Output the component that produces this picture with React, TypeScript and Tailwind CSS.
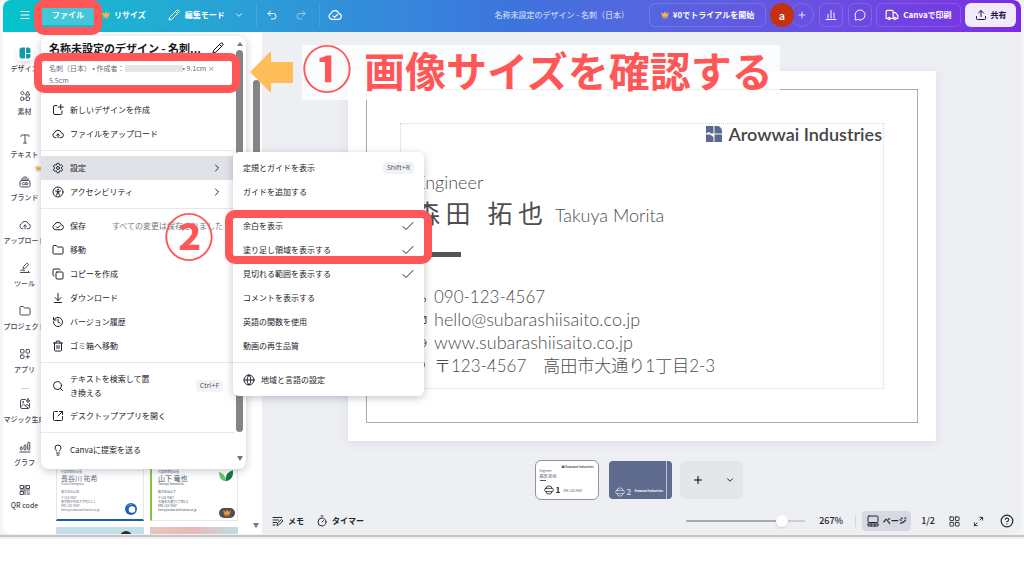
import type { ReactNode } from "react";
import {
  ArrowDownToLine,
  ChevronDown,
  ChevronRight,
  CircleHelp,
  Copy,
  Crown,
  Folder,
  Globe,
  History,
  Lightbulb,
  Menu,
  MessageCircle,
  Pencil,
  Plus,
  Redo2,
  Search,
  Settings,
  SquareArrowOutUpRight,
  Timer,
  Trash2,
  Truck,
  Type,
  Undo2,
  Upload,
} from "lucide-react";

type IconProps = { className?: string; children?: ReactNode };

function Icon({ className = "size-3", children }: IconProps) {
  return (
    <svg
      viewBox="0 0 24 24"
      className={`shrink-0 ${className}`}
      fill="none"
      stroke="currentColor"
      strokeWidth="2"
      strokeLinecap="round"
      strokeLinejoin="round"
      aria-hidden="true"
    >
      {children}
    </svg>
  );
}

const cloud = "M7 19.5a5.3 5.3 0 0 1-1.6-10.3 7 7 0 0 1 13.3.4A5 5 0 0 1 18 19.5z";

const CloudDone = ({ className }: IconProps) => (
  <Icon className={className}>
    <path d={cloud} />
    <path d="m8.5 13.5 2.7 2.7 5-5" />
  </Icon>
);

const CloudUp = ({ className }: IconProps) => (
  <Icon className={className}>
    <path d="M8 19.5H7a5.3 5.3 0 0 1-1.6-10.3 7 7 0 0 1 13.3.4A5 5 0 0 1 18 19.5h-2" />
    <path d="M12 19.5V12m-3 2.8 3-3 3 3" />
  </Icon>
);

const NewDesign = ({ className }: IconProps) => (
  <Icon className={className}>
    <path d="M10 3H6a3 3 0 0 0-3 3v12a3 3 0 0 0 3 3h11a3 3 0 0 0 3-3v-4M17.500 1v10M12.500 6h10" />
  </Icon>
);

const Access = ({ className }: IconProps) => (
  <Icon className={className}>
    <circle cx="12" cy="12" r="10" />
    <circle cx="12" cy="6.800" r="1" fill="currentColor" />
    <path d="M7 10c3.500 1 6.500 1 10 0M10.500 10.500v4L9 18.500M13.500 10.500v4l1.500 4M12 10.800v3.700" />
  </Icon>
);

const Elements = ({ className }: IconProps) => (
  <Icon className={className}>
    <path d="m7 3 3.500 3.500L7 10 3.500 6.500zM17.500 3l4 7h-8z" />
    <circle cx="6.500" cy="17.500" r="3.500" />
    <rect x="14" y="14" width="7" height="7" rx="1.500" />
  </Icon>
);

const Brand = ({ className }: IconProps) => (
  <Icon className={className}>
    <rect x="2" y="9" width="20" height="13" rx="3" />
    <path d="M4.500 6h15M8 3c2-1.500 6-1.500 8 0M11 13.500c-3-1.500-4.500 0-4.500 2s1.500 3.500 4.500 2M14 13.500h2.500c2 0 2 4 0 4H14z" />
  </Icon>
);

const Tools = ({ className }: IconProps) => (
  <Icon className={className}>
    <path d="m8 14 1-5 6-6c1.500-1.500 5 1 3.500 3l-6 6.500zM3 17c3-3 5 2 8 1M3 21h18l-3-3" />
  </Icon>
);

const Apps = ({ className }: IconProps) => (
  <Icon className={className}>
    <rect x="3" y="3" width="7" height="7" rx="1.500" />
    <rect x="14" y="3" width="7" height="7" rx="1.500" />
    <rect x="3" y="14" width="7" height="7" rx="1.500" />
    <path d="M17.500 14v7M14 17.500h7" />
  </Icon>
);

const Magic = ({ className }: IconProps) => (
  <Icon className={className}>
    <path d="M13 3H6a3 3 0 0 0-3 3v12a3 3 0 0 0 3 3h12a3 3 0 0 0 3-3v-7M4 17l5-5 9 8M13 15l3-2 4 3M18 1.500l1 3 3 1-3 1-1 3-1-3-3-1 3-1z" />
    <circle cx="8" cy="8" r="1" />
  </Icon>
);

const Graph = ({ className }: IconProps) => (
  <Icon className={className}>
    <rect x="2.500" y="12" width="4" height="6" rx="2" />
    <rect x="10" y="8" width="4" height="10" rx="2" />
    <rect x="17.500" y="2.500" width="4" height="15.500" rx="2" />
    <path d="M2 22h20" />
  </Icon>
);

const QrCode = ({ className }: IconProps) => (
  <Icon className={className}>
    <path d="M3 3h6v6H3zM15 3h6v6h-6zM3 15h6v6H3zM12 3v6M3 12h9M15 12h6M12 12v9M16 16h1M20 16v1M16 20h5" />
  </Icon>
);

const Stats = ({ className }: IconProps) => (
  <Icon className={className}>
    <path d="M6 11v7M12 3v15M18 8v10M2 21h20" />
  </Icon>
);

const Notes = ({ className }: IconProps) => (
  <Icon className={className}>
    <path d="M2 5h18M2 10h11M2 15h7M2 20h4M10 20l1-4 8-7 3 3-8 7z" />
  </Icon>
);

const PagesIcon = ({ className }: IconProps) => (
  <Icon className={className}>
    <rect x="2" y="2" width="20" height="13" rx="2" />
    <path d="M2 18v4h20v-4M2 18h20M8.500 18v4M15.500 18v4" />
  </Icon>
);

const GridIcon = ({ className }: IconProps) => (
  <Icon className={className}>
    <rect x="2" y="2" width="8" height="8" rx="1" />
    <rect x="14" y="2" width="8" height="8" rx="1" />
    <rect x="2" y="14" width="8" height="8" rx="1" />
    <rect x="14" y="14" width="8" height="8" rx="1" />
  </Icon>
);

const Expand = ({ className }: IconProps) => (
  <Icon className={className}>
    <path d="M15 3h6v6M21 3l-6 6M9 21H3v-6M3 21l6-6" />
  </Icon>
);

const PageMark = ({ className }: IconProps) => (
  <Icon className={className}>
    <path d="M5 8a7 6 0 0 1 14 0M5 16a7 6 0 0 0 14 0" />
    <rect x="2" y="8" width="20" height="8" rx="2" />
  </Icon>
);

const Templates = () => (
  <span className="flex size-4 items-center justify-center rounded-sm bg-white shadow-md">
    <svg viewBox="0 0 24 24" className="size-3 fill-[#0e9aa8]" aria-hidden="true">
      <path d="M6 1h6v22H6a5 5 0 0 1-5-5V6a5 5 0 0 1 5-5zM14 1h4a5 5 0 0 1 5 5v6h-9zM14 14h9v4a5 5 0 0 1-5 5h-4z" />
    </svg>
  </span>
);

const rail = [
  { label: "デザイン", icon: <Templates /> },
  { label: "素材", icon: <Elements /> },
  { label: "テキスト", icon: <Type className="size-3" /> },
  { label: "ブランド", icon: <Brand />, pro: true },
  { label: "アップロード", icon: <CloudUp /> },
  { label: "ツール", icon: <Tools /> },
  { label: "プロジェクト", icon: <Folder className="size-3" /> },
  { label: "アプリ", icon: <Apps /> },
  { label: "マジック生成", icon: <Magic />, divided: true },
  { label: "グラフ", icon: <Graph /> },
  { label: "QR code", icon: <QrCode /> },
];

function Header() {
  const outlined =
    "flex h-6 items-center justify-center rounded-md border border-white/15";
  return (
    <header className="flex h-8 items-center rounded-t-lg bg-linear-to-r from-[#02c3cc] via-[#3c74de] to-[#7a2ae4] pr-[5px] pb-0.5 text-[8px] font-bold text-white">
      <button className="flex w-[39px] justify-center pl-1" aria-label="メニュー">
        <Menu className="size-3" />
      </button>
      <button className="h-5 w-[52px] bg-white/20">ファイル</button>
      <button className="ml-2 flex items-center gap-1">
        <Crown className="size-2 fill-[#f5b942] text-[#f5b942]" />
        リサイズ
      </button>
      <button className="ml-[22px] flex items-center gap-[5px]">
        <Pencil className="size-3" />
        編集モード
        <ChevronDown className="ml-1 size-[10px]" />
      </button>
      <span className="ml-3 h-6 w-px bg-white/10" />
      <button className="ml-2 px-px" aria-label="元に戻す">
        <Undo2 className="size-3" />
      </button>
      <button className="ml-4 text-white/50" aria-label="やり直す">
        <Redo2 className="size-3" />
      </button>
      <span className="ml-3 h-6 w-px bg-white/10" />
      <button className="ml-2" aria-label="保存済み">
        <CloudDone className="size-[14px]" />
      </button>
      <p className="ml-auto font-medium text-white/70">名称未設定のデザイン - 名刺（日本）</p>
      <button className={`${outlined} ml-5 w-[117px] gap-1`}>
        <Crown className="size-2 fill-[#f5b942] text-[#f5b942]" />
        ¥0でトライアルを開始
      </button>
      <span className="z-10 ml-1 flex size-6 items-center justify-center rounded-full bg-[#c5330e] text-[11px] font-medium">
        a
      </span>
      <button
        className="-ml-1 flex size-6 items-center justify-center rounded-full border border-white/15"
        aria-label="メンバーを追加"
      >
        <Plus className="size-[10px]" />
      </button>
      <button className={`${outlined} ml-[5px] w-6`} aria-label="分析">
        <Stats />
      </button>
      <button className={`${outlined} ml-[5px] w-6`} aria-label="コメント">
        <MessageCircle className="size-3" />
      </button>
      <button className={`${outlined} ml-1 w-[85px] gap-1`}>
        <Truck className="size-[14px]" />
        Canvaで印刷
      </button>
      <button className="ml-1 flex h-6 w-[51px] items-center justify-center gap-1 rounded-md bg-[#f1e9fd] text-[#22143c]">
        <Upload className="size-3" />
        共有
      </button>
    </header>
  );
}

function Rail() {
  return (
    <nav className="w-[43px] shrink-0 overflow-hidden bg-white pt-3 [contain:size]">
      {rail.map((item) => (
        <div key={item.label}>
          {item.divided && <hr className="mx-auto mb-1.5 w-2 border-gray-300" />}
          <a
            href="#"
            className="relative flex h-[43px] flex-col items-center text-[7px] font-medium whitespace-nowrap text-[#454c59]"
          >
            <span className="flex h-[18px] items-center">{item.icon}</span>
            <span className="leading-3">{item.label}</span>
            {item.pro && (
              <Crown className="absolute -top-2 right-1 size-[7px] fill-[#f0b04a] text-[#f0b04a]" />
            )}
          </a>
        </div>
      ))}
    </nav>
  );
}

function TemplatePanel() {
  return (
    <aside className="flex w-[216px] shrink-0 bg-white [contain:size]">
      <div className="flex flex-1 flex-col justify-end overflow-hidden pr-3 pl-[10px]">
        <div className="grid grid-cols-2 gap-1.5">
          <div className="relative h-[58px] border border-b-2 border-gray-200 border-b-[#1b5bb0] pt-1.5 pl-1 text-[3px] leading-1 text-gray-500">
            <p>代表取締役社長</p>
            <p className="text-[7px] leading-2">長谷川 祐希</p>
            <p>Yuuki Hasegawa</p>
            <p className="mt-1">株式会社山田</p>
            <p className="mt-0.5">〒123-4567</p>
            <p>東京都中央区大手町3-2-1</p>
            <p>090-123-4567</p>
            <p>hello@subarashiisaito.co.jp</p>
            <svg viewBox="0 0 24 24" className="absolute right-1.5 bottom-1 size-3">
              <circle cx="12" cy="12" r="12" fill="#1d63bd" />
              <circle cx="14" cy="13" r="6.500" fill="#fff" />
              <path d="M3 8c3-5 9-7 14-4-6-1-10 1-14 4z" fill="#8ec3f0" />
            </svg>
          </div>
          <div className="relative h-[58px] border border-l-2 border-gray-200 border-l-[#86c440] pt-1.5 pl-1.5 text-[3px] leading-1 text-gray-600">
            <p>代表取締役社長</p>
            <p className="text-[7px] leading-2">山下 竜也</p>
            <p>Tatsuya Yamashita</p>
            <p className="mt-1">株式会社山下</p>
            <p className="mt-0.5">〒123-4567</p>
            <p>大阪市大通り1丁目2-3</p>
            <p>090-123-4567</p>
            <p>hello@subarashiisaito.co.jp</p>
            <svg viewBox="0 0 24 20" className="absolute top-1.5 right-1 h-3 w-[14px]">
              <path d="M12 19C2 18 0 10 0 3c7 2 12 7 12 16z" fill="#6fc36f" />
              <path d="M12 19C10 8 16 2 24 0c1 11-3 17-12 19z" fill="#147a3c" />
            </svg>
            <span className="absolute right-0.5 bottom-0.5 flex h-[10px] w-4 items-center justify-center rounded-full bg-[#4c4f55]">
              <Crown className="size-2 fill-[#f0963c] text-[#f0963c]" />
            </span>
          </div>
          <div className="flex h-[7px] justify-end overflow-hidden bg-[#c3dfe6] px-3">
            <span className="mt-1 h-3 w-3 rounded-full bg-[#2b2b30]" />
          </div>
          <div className="h-[7px] bg-linear-to-r from-[#e9c4bf] via-[#e8b9b8] to-[#bfdde6]" />
        </div>
      </div>
      <div className="flex w-3 flex-col items-center pt-12 pb-1.5">
        <span className="h-[224px] w-[7px] rounded-full bg-[#858585]" />
        <span className="mt-auto border-x-3 border-t-5 border-x-transparent border-t-[#777]" />
      </div>
    </aside>
  );
}

type Item = { label: string; icon: ReactNode; arrow?: boolean; note?: string; keys?: string };

const menu: Item[][] = [
  [
    { label: "新しいデザインを作成", icon: <NewDesign /> },
    { label: "ファイルをアップロード", icon: <CloudUp /> },
  ],
  [
    { label: "設定", icon: <Settings className="size-3" />, arrow: true },
    { label: "アクセシビリティ", icon: <Access />, arrow: true },
  ],
  [
    { label: "保存", icon: <CloudDone />, note: "すべての変更は保存されました" },
    { label: "移動", icon: <Folder className="size-3" /> },
    { label: "コピーを作成", icon: <Copy className="size-3" /> },
    { label: "ダウンロード", icon: <ArrowDownToLine className="size-3" /> },
    { label: "バージョン履歴", icon: <History className="size-3" /> },
    { label: "ゴミ箱へ移動", icon: <Trash2 className="size-3" /> },
  ],
  [
    { label: "テキストを検索して置き換える", icon: <Search className="size-3" />, keys: "Ctrl+F" },
    { label: "デスクトップアプリを開く", icon: <SquareArrowOutUpRight className="size-3" /> },
  ],
  [{ label: "Canvaに提案を送る", icon: <Lightbulb className="size-3" /> }],
];

function FileMenu() {
  return (
    <div className="absolute top-9 left-[38px] z-20 w-[205px] rounded-lg bg-white pb-[7px] shadow-[0_2px_8px_rgba(60,70,100,0.3)]">
      <div className="flex h-6 items-center justify-between pr-[22px] pl-2">
        <h1 className="text-[11px] font-bold whitespace-nowrap text-[#15181e]">
          名称未設定のデザイン - 名刺...
        </h1>
        <button aria-label="名前を変更">
          <Pencil className="size-3" />
        </button>
      </div>
      <p className="mb-[10px] flex h-7 w-[180px] flex-wrap content-center items-center pl-2 text-[7px] leading-3 text-[#666c78]">
        名刺（日本） • 作成者：
        <span className="h-[7px] w-[58px] bg-[#e4e5e8]" />
        <span>• 9.1cm ×</span>
        <span>5.5cm</span>
      </p>
      {menu.map((group, i) => (
        <div key={i}>
          {i > 0 && <hr className="mt-1 mr-3 mb-[5px] border-gray-200" />}
          {group.map((item) => (
            <button
              key={item.label}
              className={`flex min-h-6 w-[192px] items-center pr-[10px] pl-[11px] text-left text-[8px] text-[#1c212b] ${
                item.label === "設定" ? "bg-[#e0e2e7]" : ""
              }`}
            >
              {item.icon}
              <span
                className={
                  item.keys ? "ml-1.5 w-[84px] py-1 leading-[14px]" : "ml-1.5 whitespace-nowrap"
                }
              >
                {item.label}
              </span>
              {item.note && (
                <span className="ml-auto whitespace-nowrap text-[#747a86]">{item.note}</span>
              )}
              {item.arrow && <ChevronRight className="ml-auto size-3" />}
              {item.keys && (
                <kbd className="ml-auto rounded-sm bg-[#f1f3f7] px-1 py-px font-['Open_Sans',sans-serif] text-[7px] text-[#4a505c]">
                  {item.keys}
                </kbd>
              )}
            </button>
          ))}
        </div>
      ))}
      <div className="absolute top-1.5 right-[3px] bottom-2 flex w-[7px] flex-col items-center">
        <span className="border-x-3 border-b-4 border-x-transparent border-b-[#777]" />
        <span className="mt-1 mb-6 w-full flex-1 rounded-full bg-[#858585]" />
        <span className="border-x-3 border-t-5 border-x-transparent border-t-[#777]" />
      </div>
    </div>
  );
}

const views = [
  { label: "余白を表示", on: true },
  { label: "塗り足し領域を表示する", on: true },
  { label: "見切れる範囲を表示する", on: true },
  { label: "コメントを表示する", on: false },
  { label: "英語の関数を使用", on: false },
  { label: "動画の再生品質", on: false },
];

function SettingsMenu() {
  const row = "flex h-6 w-full items-center justify-between px-[10px]";
  return (
    <div className="absolute top-[152px] left-[230px] z-20 w-[191px] rounded-md bg-white py-1 text-[8px] text-[#1c212b] shadow-[0_2px_8px_rgba(60,70,100,0.3)]">
      <button className={row}>
        定規とガイドを表示
        <kbd className="rounded-sm bg-[#f1f3f7] px-1 py-px font-['Open_Sans',sans-serif] text-[7px] text-[#4a505c]">
          Shift+R
        </kbd>
      </button>
      <button className={`${row} mb-[10px]`}>ガイドを追加する</button>
      {views.map((v) => (
        <button key={v.label} role="menuitemcheckbox" aria-checked={v.on} className={row}>
          {v.label}
          {v.on && (
            <Icon className="size-3">
              <path d="m2 13 6 6L22 5" />
            </Icon>
          )}
        </button>
      ))}
      <hr className="mt-1 mb-[5px] border-gray-200" />
      <button className="flex h-6 items-center gap-1.5 px-[10px]">
        <Globe className="size-3" />
        地域と言語の設定
      </button>
    </div>
  );
}

const contacts = [
  { mark: "M5 3h4l2 5-3 2a12 12 0 0 0 6 6l2-3 5 2v4a2 2 0 0 1-2 2A17 17 0 0 1 3 5z", text: "090-123-4567" },
  { mark: "M2 5h20v14H2zM2 6l10 7 10-7", text: "hello@subarashiisaito.co.jp", web: true },
  { mark: "M12 2a10 10 0 1 0 .1 0M2 12h20M12 2c-6 6-6 14 0 20 6-6 6-14 0-20", text: "www.subarashiisaito.co.jp", web: true },
  { mark: "M12 22c-5-6-7-9-7-13a7 7 0 0 1 14 0c0 4-2 7-7 13z", text: "〒123-4567　高田市大通り1丁目2-3" },
];

function BusinessCard() {
  return (
    <div className="bg-white p-[18px] shadow-[0_2px_10px_rgba(90,100,130,0.12)]">
      <div className="border border-[#a9abb0] px-[33px] py-[33px]">
        <div className="border border-dotted border-gray-300 pb-[11px] pl-[14px] font-['Lato','Noto_Sans_CJK_JP',sans-serif] text-[#4d4d4f]">
          <div className="flex h-5 items-center justify-end gap-1.5 pr-px text-[18px] font-semibold text-[#454547]">
            <svg viewBox="0 0 16 16" className="size-4 fill-[#5a6a8e]" aria-hidden="true">
              <path d="M0 0h7.500v7.500H5L3 6 0 7.500zM8.500 0H11a5 5 0 0 1 5 5v2.500H8.500zM0 8.500h4L7.500 11v5H0zM8.500 8.500H16V16H8.500z" />
            </svg>
            Arowwai Industries
          </div>
          <p className="mt-[26px] h-6 text-[18px] leading-6 font-light">Engineer</p>
          <p className="flex h-9 items-center gap-3">
            <span className="font-['Noto_Sans_CJK_JP',sans-serif] text-[25px] leading-9 whitespace-pre">
              森 田   拓 也
            </span>
            <span className="pt-1.5 text-[18px] font-light">Takuya Morita</span>
          </p>
          <div className="mt-[22px] mb-7 h-[5px] w-[46px] bg-[#555557]" />
          {contacts.map((c) => (
            <p
              key={c.text}
              className={`flex h-[23px] items-center gap-[7px] leading-[23px] font-light whitespace-nowrap ${
                c.web ? "text-[18px]" : "text-[17px]"
              }`}
            >
              <Icon>
                <path d={c.mark} />
              </Icon>
              {c.text}
            </p>
          ))}
        </div>
      </div>
    </div>
  );
}

function Pages() {
  return (
    <div className="mt-[19px] flex items-center justify-center gap-2 pr-1.5">
      <button className="relative mr-0.5 h-10 w-16 rounded-md border border-[#8f949e] bg-white text-left text-[3px] leading-1 text-gray-600">
        <span className="absolute top-1 right-1 font-bold">■ Arowwai Industries</span>
        <span className="absolute top-2 left-1">Engineer</span>
        <span className="absolute top-[13px] left-1 text-[4px] leading-1">森田 拓也</span>
        <span className="absolute top-[19px] left-1 h-px w-1.5 bg-gray-600" />
        <span className="absolute bottom-1 left-2 flex items-center gap-0.5 text-[8px] leading-2 font-bold text-[#22262e]">
          <PageMark className="size-[10px]" />1
        </span>
        <span className="absolute bottom-1.5 left-[28px]">090-123-4567</span>
      </button>
      <button className="relative h-[38px] w-[63px] rounded-sm bg-[#5e6b8e] text-[3px] leading-1 text-white">
        <span className="absolute inset-y-0 right-[5px] w-px bg-white/60" />
        <span className="absolute bottom-0.5 left-1.5 flex items-center gap-0.5 text-[8px] leading-2 font-bold text-white/70">
          <PageMark className="size-[10px]" />2
        </span>
        <span className="absolute bottom-1.5 left-[26px] font-bold">Arowwai Industries</span>
      </button>
      <div className="flex h-[38px] w-[63px] items-center justify-between rounded-md bg-[#e4e6ea] pr-2 pl-3">
        <button aria-label="ページを追加">
          <Plus className="size-3" />
        </button>
        <button aria-label="ページの種類">
          <ChevronDown className="size-[10px]" />
        </button>
      </div>
    </div>
  );
}

function Footer() {
  return (
    <footer className="mt-2 flex h-[26px] items-center pr-[7px] pl-[10px] text-[8px] font-bold text-[#22262e]">
      <button className="flex items-center gap-1">
        <Notes />
        メモ
      </button>
      <button className="ml-3 flex items-center gap-1">
        <Timer className="size-3" />
        タイマー
      </button>
      <input
        type="range"
        aria-label="ズーム"
        defaultValue={84}
        className="ml-auto h-3 w-[119px] appearance-none bg-transparent [&::-webkit-slider-runnable-track]:h-0.5 [&::-webkit-slider-runnable-track]:rounded-full [&::-webkit-slider-runnable-track]:bg-linear-to-r [&::-webkit-slider-runnable-track]:from-[#a4a8b8] [&::-webkit-slider-runnable-track]:from-80% [&::-webkit-slider-runnable-track]:to-[#c9ccd5] [&::-webkit-slider-runnable-track]:to-80% [&::-webkit-slider-thumb]:-mt-[5px] [&::-webkit-slider-thumb]:size-3 [&::-webkit-slider-thumb]:appearance-none [&::-webkit-slider-thumb]:rounded-full [&::-webkit-slider-thumb]:bg-white [&::-webkit-slider-thumb]:shadow"
      />
      <span className="ml-[14px] w-7 text-[9px] font-medium">267%</span>
      <span className="ml-2 h-3 w-px bg-gray-300" />
      <button className="ml-1.5 flex h-5 w-[49px] items-center justify-center gap-1 rounded-sm bg-[#d6d9e2]">
        <PagesIcon />
        ページ
      </button>
      <span className="ml-[10px] text-[9px] font-medium">1/2</span>
      <button className="ml-[14px]" aria-label="グリッド表示">
        <GridIcon className="size-[11px]" />
      </button>
      <button className="ml-[13px]" aria-label="全画面表示">
        <Expand className="size-[11px]" />
      </button>
      <button className="ml-4" aria-label="ヘルプ">
        <CircleHelp className="size-[14px]" />
      </button>
    </footer>
  );
}

function Annotations() {
  return (
    <div className="pointer-events-none font-bold text-[#ff5757]">
      <span className="absolute top-0 left-[31px] z-30 h-[35px] w-[68px] rounded-[10px] border-8 border-[#ff5757]" />
      <span className="absolute top-[53px] left-[31px] z-30 h-10 w-[206px] rounded-[10px] border-8 border-[#ff5757]" />
      <span className="absolute top-[210px] left-[222px] z-30 h-[54px] w-[207px] rounded-[10px] border-8 border-[#ff5757]" />
      <svg
        viewBox="0 0 43 42"
        className="absolute top-[51px] left-[247px] z-30 h-[42px] w-[43px] fill-[#ffbd59]"
        aria-hidden="true"
      >
        <path d="M0 21 21 0v11h22v21H21v10z" />
      </svg>
      <p className="absolute top-[45px] left-[299px] z-10 flex h-[55px] w-[478px] items-start gap-3 bg-white/80 text-[41px] leading-[49px] whitespace-nowrap">
        <span className="text-[50px] leading-[43px]">①</span>
        <span>画像サイズを確認する</span>
      </p>
      <span className="absolute top-[207px] left-[161px] z-30 text-[50px] leading-[55px]">②</span>
    </div>
  );
}

export default function App() {
  return (
    <div className="bg-white font-['Noto_Sans_CJK_JP',sans-serif]">
      <div className="border-b border-[#f0f0f0] bg-[#f5f5f6] px-[3px]">
        <div className="relative">
          <Header />
          <div className="flex overflow-hidden rounded-b-lg">
            <Rail />
            <TemplatePanel />
            <main className="flex-1 bg-[#edeff3]">
              <div className="pt-[39px] pr-[85px] pl-[86px]">
                <BusinessCard />
              </div>
              <Pages />
              <Footer />
            </main>
          </div>
          <FileMenu />
          <SettingsMenu />
          <Annotations />
        </div>
      </div>
      <div className="h-1 border-t-2 border-[#c4c5c7] bg-[#f0f0f1]" />
    </div>
  );
}
